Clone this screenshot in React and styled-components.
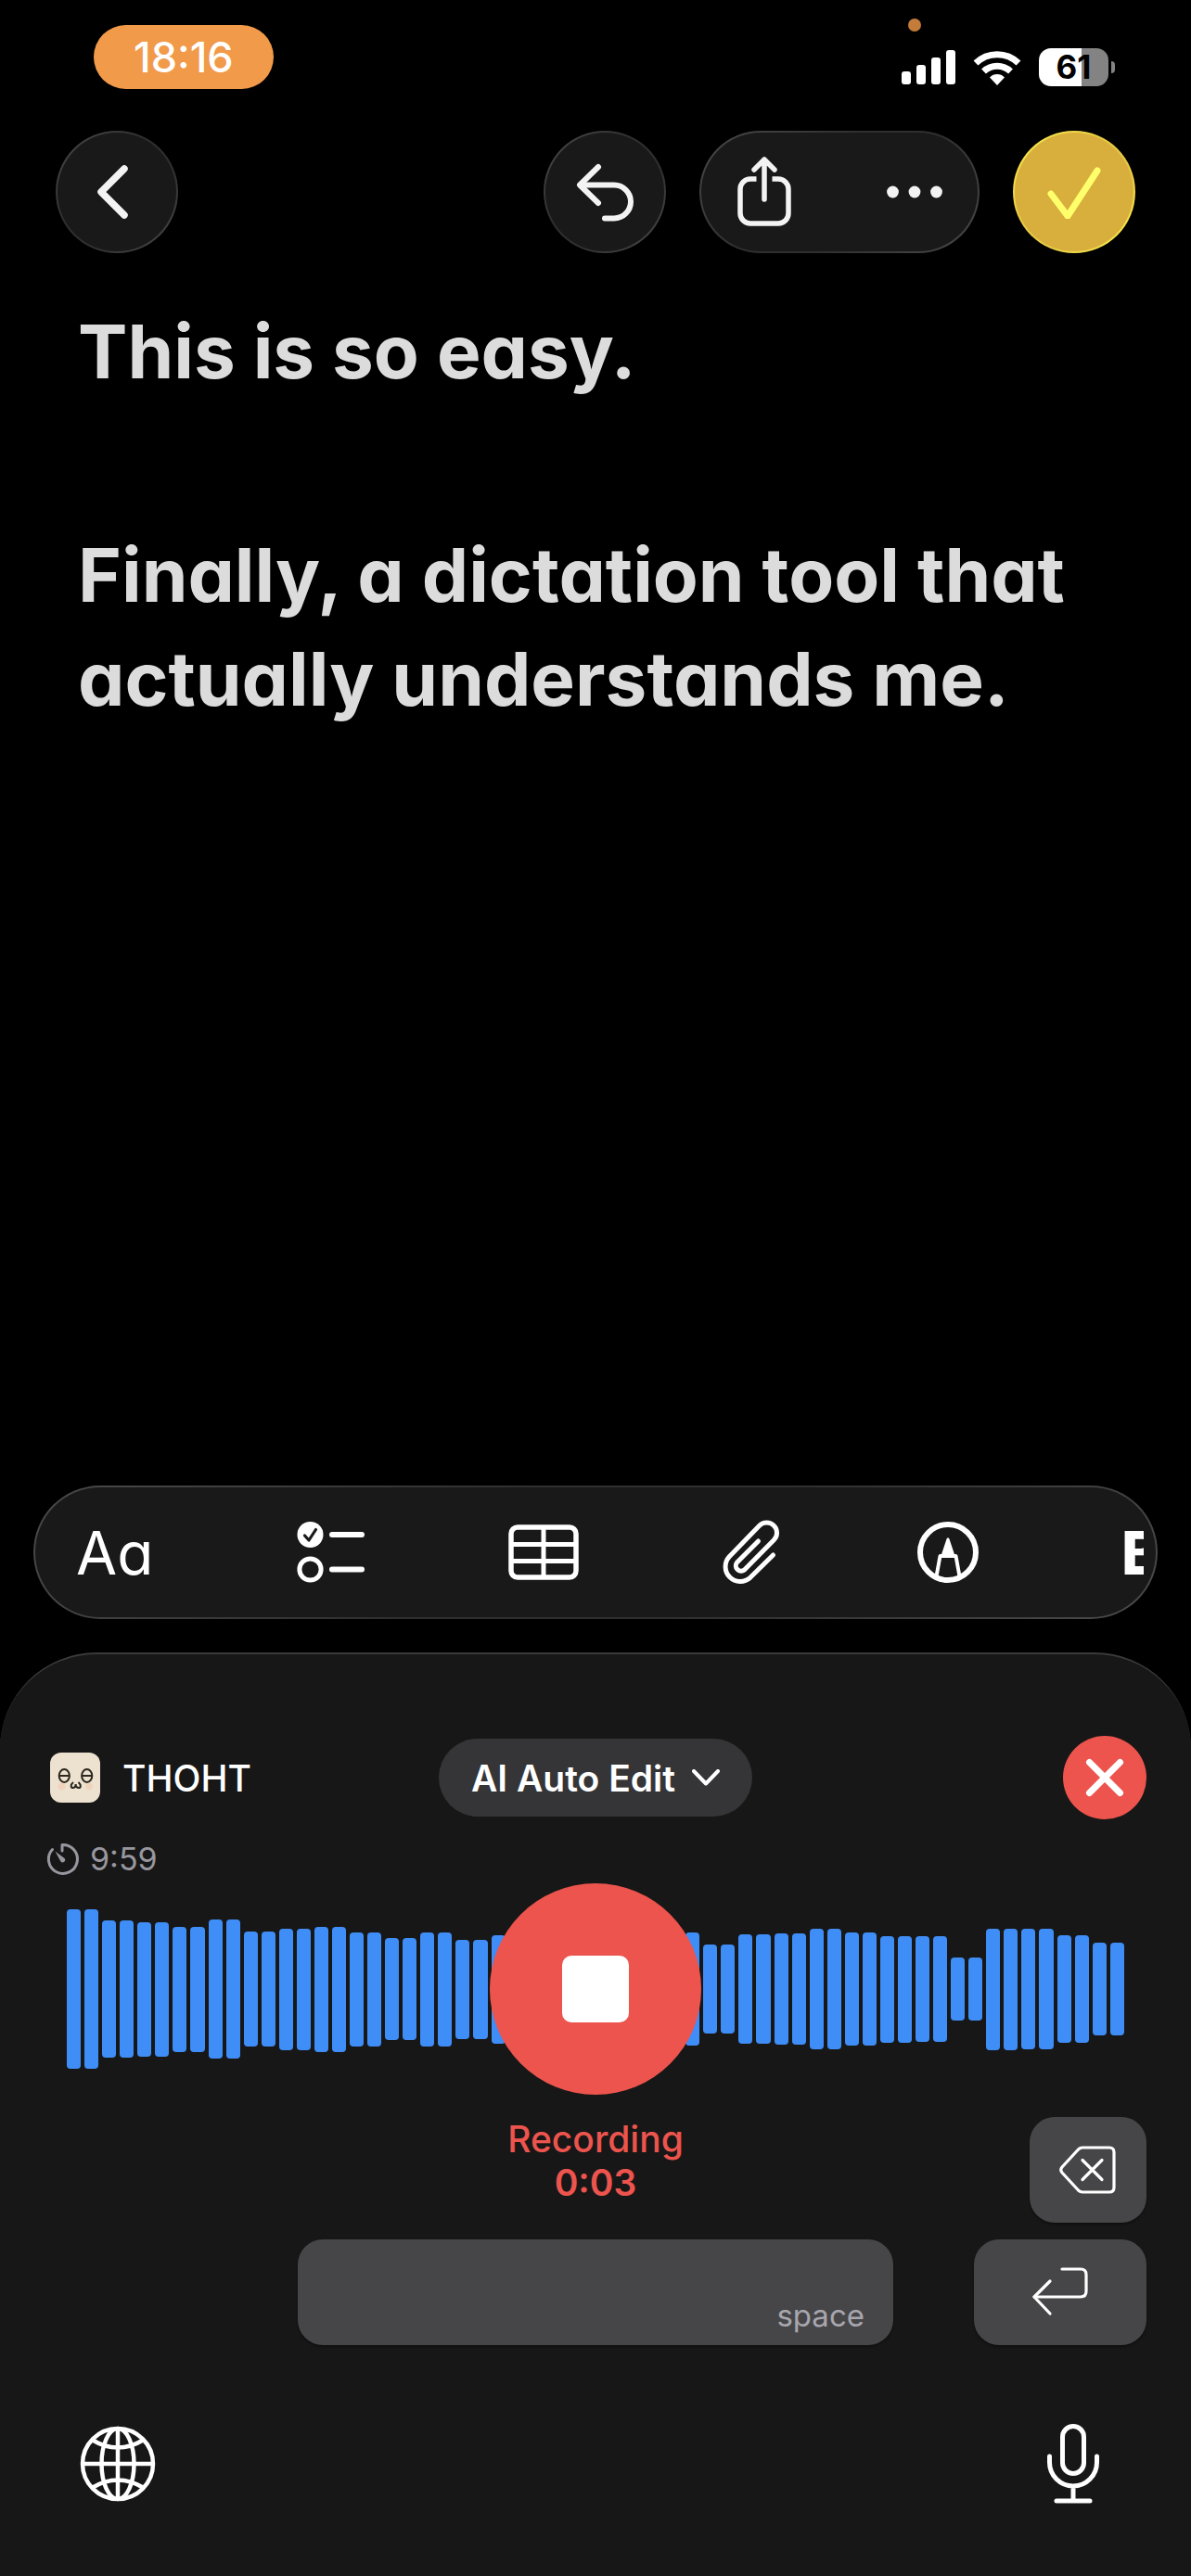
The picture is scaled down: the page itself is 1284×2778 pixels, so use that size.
import React, { useState } from 'react';
import styled, { createGlobalStyle, css } from 'styled-components';

// Bar heights in px, every level is drawn twice
const LEVELS = [
    172, 148, 145, 135, 150, 124, 131, 135, 123, 110,
    123, 107, 117, 124, 130, 118, 112, 122, 96, 118,
    120, 130, 122, 115, 114, 68, 131, 130, 116, 100,
];

const BackIcon = () => (
    <svg width="42" height="58" viewBox="0 0 42 58" fill="none" stroke="#f3f3f3" strokeWidth="7.500" strokeLinecap="round" strokeLinejoin="round">
        <path d="M29 4L4 29L29 54" />
    </svg>
);

const UndoIcon = () => (
    <svg width="68" height="66" viewBox="0 0 68 66" fill="none" stroke="#f3f3f3" strokeWidth="6" strokeLinecap="round" strokeLinejoin="round">
        <path d="M27 6L7 25.500L27 45" />
        <path d="M8 25.500H44a18 18 0 0 1 0 36H34" />
    </svg>
);

const ShareIcon = () => (
    <svg width="60" height="78" viewBox="0 0 60 78" fill="none" stroke="#f3f3f3" strokeWidth="5.500">
        <path d="M21.500 25H15A11 11 0 0 0 4 36V62A11 11 0 0 0 15 73H45A11 11 0 0 0 56 62V36A11 11 0 0 0 45 25H38.500" />
        <path d="M30 5V47M19 15L30 4L41 15" strokeLinecap="round" strokeLinejoin="round" />
    </svg>
);

const WifiIcon = () => (
    <svg width="52" height="38" viewBox="0 0 52 38" fill="none" stroke="#fff" strokeWidth="7">
        <path d="M3 14A33 33 0 0 1 49 14" />
        <path d="M11.500 23A21 21 0 0 1 40.500 23" />
        <path d="M26 38L18 29.500A11 11 0 0 1 34 29.500Z" fill="#fff" stroke="none" />
    </svg>
);

const ChecklistIcon = () => (
    <svg width="74" height="68" viewBox="0 0 74 68" fill="none" stroke="#fff" strokeWidth="5" strokeLinecap="round" strokeLinejoin="round">
        <circle cx="14.500" cy="15" r="14" fill="#fff" stroke="none" />
        <path d="M8.500 16L13 21L20.500 9.500" stroke="#191919" strokeWidth="3.200" />
        <circle cx="14.500" cy="52.500" r="11.600" />
        <path d="M38 15H70M38 52.500H70" strokeWidth="6" />
    </svg>
);

const TableIcon = () => (
    <svg width="76" height="60" viewBox="0 0 76 60" fill="none" stroke="#fff" strokeWidth="5.500">
        <rect x="3" y="3" width="70" height="54" rx="7" />
        <path d="M3 21.500H73M3 39.500H73M38 3V57" strokeWidth="5" />
    </svg>
);

const ClipIcon = () => (
    <svg width="56" height="72" viewBox="11 18 56 72" overflow="visible" fill="none" stroke="#fff" strokeWidth="5" strokeLinecap="round" strokeLinejoin="round">
        <path d="M66.500 57L41.800 81.300A16 16 0 0 1 19.200 58.700L51.700 25.200A11 11 0 0 1 67.300 40.800L35.500 73A5.700 5.700 0 0 1 27.500 65L50.500 42" />
    </svg>
);

const PenIcon = () => (
    <svg width="66" height="66" viewBox="-33 -33 66 66" fill="none" stroke="#fff" strokeLinejoin="round">
        <circle r="30" strokeWidth="6" />
        <path d="M0 -14L-6 4H6Z" fill="#fff" strokeWidth="3" />
        <path d="M-12.500 26L-8.500 4H8.500L12.500 26" strokeWidth="4" />
    </svg>
);

const Face = () => (
    <svg width="54" height="54" viewBox="0 0 54 54" fill="none" stroke="#2c271f" strokeWidth="2">
        <rect width="54" height="54" rx="12" fill="#ede2cf" stroke="none" />
        <circle cx="12.500" cy="36.500" r="4" fill="#f0d3bd" stroke="none" />
        <circle cx="42" cy="36.500" r="4" fill="#f0d3bd" stroke="none" />
        <ellipse cx="15.300" cy="25" rx="5.600" ry="7" />
        <ellipse cx="39.700" cy="25" rx="5.600" ry="7" />
        <path d="M10 25H21M34 25H45" />
        <path d="M25 32C21.500 35 22.500 38 24.500 38C27 38 27.600 36 27.600 34C27.600 36 28.500 38 31 38C33 38 34 35 30.500 32" />
    </svg>
);

const TimerIcon = () => (
    <svg width="36" height="36" viewBox="0 0 36 36" fill="none" stroke="#98979f" strokeWidth="3" strokeLinecap="round" strokeLinejoin="round">
        <path d="M17 9V2.500A15.500 15.500 0 1 1 6.500 7.500" />
        <path d="M9.500 9.500L19.500 17A2.600 2.600 0 0 1 15.500 20.500Z" fill="#98979f" stroke="none" />
    </svg>
);

const BackspaceIcon = () => (
    <svg width="64" height="52" viewBox="0 0 64 52" fill="none" stroke="#fff" strokeWidth="3.200" strokeLinecap="round" strokeLinejoin="round">
        <path d="M26 2H55Q60 2 60 7V45Q60 50 55 50H26Q23.500 50 21.500 48L4 29Q1.500 26 4 23L21.500 4Q23.500 2 26 2Z" />
        <path d="M26 15.500L47 36.500M47 15.500L26 36.500" />
    </svg>
);

const ReturnIcon = () => (
    <svg width="62" height="56" viewBox="0 0 62 56" fill="none" stroke="#fff" strokeWidth="3.200" strokeLinecap="round" strokeLinejoin="round">
        <path d="M33 3H53Q59 3 59 9V27Q59 33 53 33H3" />
        <path d="M20 16L3 33L20 51" />
    </svg>
);

const GlobeIcon = () => (
    <svg width="82" height="82" viewBox="-41 -41 82 82" fill="none" stroke="#fff" strokeWidth="4.500">
        <circle r="38" />
        <ellipse rx="17.500" ry="38" />
        <path d="M-38 0H38M0 -38V38M-28 -26Q0 -9 28 -26M-28 26Q0 9 28 26" />
    </svg>
);

const MicIcon = () => (
    <svg width="58" height="86" viewBox="0 0 58 86" fill="none" stroke="#fff" strokeWidth="5" strokeLinecap="round">
        <rect x="17.500" y="2.500" width="23" height="51" rx="11.500" />
        <path d="M3.500 35V41.500A25.500 25.500 0 0 0 54.500 41.500V35M29 67V83M11 83H47" />
    </svg>
);

const App = () => {
    const [recording, setRecording] = useState(true);

    return (
    <Page>
        <GlobalStyle />
        <StatusBar>
            <Clock>18:16</Clock>
            <StatusIcons>
                <MicDot />
                <svg width="58" height="38" viewBox="0 0 58 38" fill="#fff">
                    <rect x="0" y="23" width="10" height="14" rx="3" />
                    <rect x="16" y="16" width="10" height="21" rx="3" />
                    <rect x="32" y="8" width="10" height="29" rx="3" />
                    <rect x="48" y="0" width="10" height="37" rx="3" />
                </svg>
                <WifiIcon />
                <Battery>
                    <BatteryLevel>61</BatteryLevel>
                    <BatteryTip />
                </Battery>
            </StatusIcons>
        </StatusBar>

        <NavBar>
            <RoundButton aria-label="Back"><BackIcon /></RoundButton>
            <NavActions>
                <RoundButton aria-label="Undo"><UndoIcon /></RoundButton>
                <ButtonGroup>
                    <GroupButton aria-label="Share"><ShareIcon /></GroupButton>
                    <GroupButton aria-label="More">
                        <svg width="60" height="14" viewBox="0 0 60 14" fill="#f3f3f3">
                            <circle cx="6.500" cy="7" r="6.400" />
                            <circle cx="30" cy="7" r="6.400" />
                            <circle cx="53.500" cy="7" r="6.400" />
                        </svg>
                    </GroupButton>
                </ButtonGroup>
                <RoundButton $done aria-label="Done">
                    <svg width="58" height="58" viewBox="0 0 58 58" fill="none" stroke="#ffff6b" strokeWidth="7" strokeLinecap="round" strokeLinejoin="round">
                        <path d="M4 31L22 55L54 6" />
                    </svg>
                </RoundButton>
            </NavActions>
        </NavBar>

        <Note>
            <Title>This is so easy.</Title>
            <Title>Finally, a dictation tool that actually understands me.</Title>
        </Note>

        <FormatBar>
            <ToolButton aria-label="Text style">Aa</ToolButton>
            <ToolButton aria-label="Checklist"><ChecklistIcon /></ToolButton>
            <ToolButton aria-label="Table"><TableIcon /></ToolButton>
            <ToolButton aria-label="Attach"><ClipIcon /></ToolButton>
            <ToolButton aria-label="Markup"><PenIcon /></ToolButton>
            <ToolButton $cut aria-label="Bold">B</ToolButton>
        </FormatBar>

        <Keyboard>
            <KeyboardRow>
                <Brand><Face />THOHT</Brand>
                <ModeButton>
                    AI Auto Edit
                    <svg width="30" height="18" viewBox="0 0 30 18" fill="none" stroke="#fff" strokeWidth="4" strokeLinecap="round" strokeLinejoin="round">
                        <path d="M2 2L15 15.500L28 2" />
                    </svg>
                </ModeButton>
                <CloseButton aria-label="Close">
                    <svg width="42" height="42" viewBox="0 0 42 42" stroke="#fff" strokeWidth="7" strokeLinecap="round">
                        <path d="M4.500 4.500L37.500 37.500M37.500 4.500L4.500 37.500" />
                    </svg>
                </CloseButton>
            </KeyboardRow>
            <Remaining><TimerIcon />9:59</Remaining>
            <Recorder>
                {LEVELS.flatMap((h) => [h, h]).map((h, i) => (
                    <Bar key={i} style={{ height: h }} />
                ))}
                <StopButton aria-label="Stop recording" onClick={() => setRecording(!recording)}>
                    <StopSquare />
                </StopButton>
            </Recorder>
            <KeyboardRow $top>
                <RecordState>
                    Recording
                    <strong>0:03</strong>
                </RecordState>
                <Key $width="126px" aria-label="Backspace"><BackspaceIcon /></Key>
            </KeyboardRow>
            <KeyboardRow>
                <SpaceKey>space</SpaceKey>
                <Key $width="186px" aria-label="Return"><ReturnIcon /></Key>
            </KeyboardRow>
            <BottomRow>
                <PlainButton aria-label="Next keyboard"><GlobeIcon /></PlainButton>
                <PlainButton aria-label="Dictate"><MicIcon /></PlainButton>
            </BottomRow>
        </Keyboard>
    </Page>
    );
};

export default App;

const GlobalStyle = createGlobalStyle`
* {
    box-sizing: border-box;
}
body {
    margin: 0;
    background: #000;
    color: white;
    font-family: Inter, "Liberation Sans", sans-serif;
}
button {
    display: flex;
    align-items: center;
    justify-content: center;
    flex-shrink: 0;
    margin: 0;
    padding: 0;
    border: none;
    background: none;
    color: inherit;
    font-family: inherit;
    cursor: pointer;
}
svg {
    display: block;
    flex-shrink: 0;
}
`;

const glass = css`
border: 2px solid transparent;
background:
    linear-gradient(#191919, #191919) padding-box,
    linear-gradient(135deg, #4a4a4a, #2f2f2f 40%, #2f2f2f 60%, #4a4a4a) border-box;
`;

const Page = styled.main`
display: flex;
flex-direction: column;
min-height: 100vh;
`;

const StatusBar = styled.header`
display: flex;
justify-content: space-between;
align-items: flex-start;
height: 141px;
padding: 27px 82px 0 101px;
`;

const Clock = styled.div`
padding: 0 43px;
border-radius: 35px;
background: #f19a4a;
font-size: 45px;
font-weight: 500;
line-height: 69px;
`;

const StatusIcons = styled.div`
position: relative;
display: flex;
align-items: center;
gap: 19px;
padding-top: 25px;
`;

const MicDot = styled.span`
position: absolute;
top: -7px;
left: 7px;
width: 14px;
height: 14px;
border-radius: 50%;
background: #c47c3a;
`;

const Battery = styled.div`
display: flex;
align-items: center;
gap: 3px;
`;

const BatteryLevel = styled.div`
width: 75px;
border-radius: 13px;
background: linear-gradient(90deg, #fff 61%, #838383 61%);
color: black;
font-size: 35px;
font-weight: 700;
line-height: 41px;
text-align: center;
`;

const BatteryTip = styled.span`
width: 4px;
height: 13px;
border-radius: 0 4px 4px 0;
background: #838383;
`;

const NavBar = styled.nav`
display: flex;
justify-content: space-between;
padding: 0 60px;
`;

const NavActions = styled.div`
display: flex;
gap: 36px;
`;

const RoundButton = styled.button`
width: 132px;
height: 132px;
border-radius: 50%;
${glass}
${({ $done }) => $done && css`
    background:
        linear-gradient(#d8af3c, #d8af3c) padding-box,
        linear-gradient(135deg, #fff04c, #e8cb45 40%, #e8cb45 60%, #fff04c) border-box;
`}
`;

const ButtonGroup = styled.div`
display: flex;
gap: 26px;
height: 132px;
border-radius: 66px;
${glass}
`;

const GroupButton = styled.button`
width: 136px;
`;

const Note = styled.article`
display: flex;
flex-direction: column;
gap: 129px;
flex: 1;
padding: 50px 84px;
`;

const Title = styled.p`
margin: 0;
color: #dcdcdc;
font-size: 80px;
font-weight: 700;
line-height: 112px;
font-feature-settings: "cv11";
`;

const FormatBar = styled.div`
display: flex;
align-items: center;
justify-content: space-between;
height: 144px;
margin: 0 36px 36px;
padding: 0 13px 0 44px;
border-radius: 72px;
${glass}
`;

const ToolButton = styled.button`
font-size: 64px;
font-weight: 400;
font-feature-settings: "cv11";
${({ $cut }) => $cut && css`
    justify-content: flex-start;
    width: 24px;
    overflow: hidden;
    font-weight: 800;
`}
`;

const Keyboard = styled.section`
display: flex;
flex-direction: column;
padding-top: 88px;
border-top: 2px solid #3a3a3a;
border-radius: 104px 104px 0 0;
background: #171717;
`;

const KeyboardRow = styled.div`
display: grid;
grid-template-columns: 1fr auto 1fr;
align-items: ${({ $top }) => ($top ? 'start' : 'center')};
padding: 0 48px;
margin-bottom: 18px;
& > :last-child {
    grid-column: 3;
    justify-self: end;
}
`;

const Brand = styled.div`
display: flex;
align-items: center;
gap: 24px;
padding-left: 6px;
font-size: 39px;
font-weight: 500;
`;

const ModeButton = styled.button`
gap: 18px;
height: 84px;
padding: 0 35px;
border-radius: 42px;
background: #353537;
font-size: 39px;
font-weight: 600;
`;

const CloseButton = styled.button`
width: 90px;
height: 90px;
border-radius: 50%;
background: #ec544d;
`;

const Remaining = styled.div`
display: flex;
align-items: center;
gap: 11px;
padding-left: 50px;
margin-bottom: 2px;
color: #98979f;
font-size: 34px;
line-height: 49px;
`;

const Recorder = styled.div`
position: relative;
display: flex;
align-items: center;
gap: 4px;
height: 228px;
padding: 0 72px;
margin-bottom: 24px;
`;

const Bar = styled.span`
flex: 1;
border-radius: 4px;
background: #3f8df7;
`;

const StopButton = styled.button`
position: absolute;
left: 50%;
width: 228px;
height: 228px;
margin-left: -114px;
border-radius: 50%;
background: #ec544d;
`;

const StopSquare = styled.span`
width: 72px;
height: 72px;
border-radius: 10px;
background: white;
`;

const RecordState = styled.div`
display: flex;
flex-direction: column;
grid-column: 2;
color: #ec544d;
font-size: 39px;
font-weight: 500;
line-height: 47px;
text-align: center;
strong {
    font-weight: 600;
}
`;

const Key = styled.button`
width: ${({ $width }) => $width};
height: 114px;
border-radius: 27px;
background: #464648;
box-shadow: 0 2px 2px #101010;
`;

const SpaceKey = styled(Key)`
grid-column: 2;
align-items: flex-end;
justify-content: flex-end;
width: 50vw;
padding: 0 31px 10px;
color: #a8a6ae;
font-size: 33px;
line-height: 44px;
`;

const BottomRow = styled.div`
display: flex;
justify-content: space-between;
align-items: center;
padding: 51px 97px 62px 57px;
`;

const PlainButton = styled.button`
min-width: 60px;
height: 118px;
&:first-child {
    width: 140px;
}
`;
